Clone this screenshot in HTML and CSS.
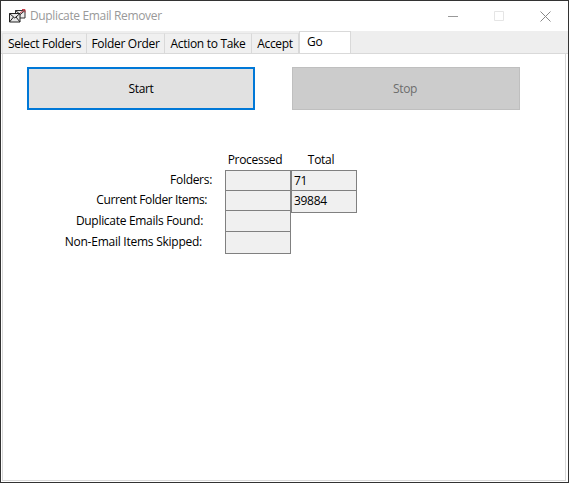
FILE: index.html
```html
<!DOCTYPE html>
<html lang="en">
  <head>
    <meta charset="UTF-8" />
    <title>Duplicate Email Remover</title>
    <link rel="stylesheet" href="styles.css">
  </head>
  <body>
    <div class="window">
      <div class="titlebar">
        <svg class="app-icon" width="17" height="15" viewBox="0 0 17 15">
          <path d="M6.500 1.500h9.500v7.500h-9.500z" fill="#eee" stroke="#333" />
          <path d="M6.500 1.500l4.750 4 4.750-4" fill="none" stroke="#333" />
          <path d="M.5 4.500h10.500v8.500h-10.500z" fill="#e8e8e8" stroke="#222" />
          <path d="M.5 4.500l5.250 4.500 5.250-4.500M.5 13l4-5M11 13l-4-5" fill="none" stroke="#222" />
          <path d="M11 4l5-3.500M13 .5h3v3" fill="none" stroke="#c8434f" />
        </svg>
        <span class="title">Duplicate Email Remover</span>
        <div class="caption-buttons">
          <svg width="11" height="11" viewBox="0 0 11 11"><path d="M0 5.500h10" stroke="#999" /></svg>
          <svg width="11" height="11" viewBox="0 0 11 11"><path d="M.5 .5h9v9h-9z" fill="none" stroke="#e5e5e5" /></svg>
          <svg width="11" height="11" viewBox="0 0 11 11"><path d="M.5 .5l10 10M10.500 .5l-10 10" stroke="#888" /></svg>
        </div>
      </div>

      <div class="tabs">
        <div class="tab tab-folders">Select Folders</div>
        <div class="tab tab-order">Folder Order</div>
        <div class="tab tab-action">Action to Take</div>
        <div class="tab tab-accept">Accept</div>
        <div class="tab tab-go">Go</div>
      </div>

      <div class="panel">
        <div class="buttons">
          <button class="btn btn-start">Start</button>
          <button class="btn btn-stop" disabled>Stop</button>
        </div>

        <div class="stats">
          <div class="heading heading-processed">Processed</div>
          <div class="heading heading-total">Total</div>

          <div class="label label-folders">Folders:</div>
          <div class="cell"></div>
          <div class="cell">71</div>

          <div class="label label-items">Current Folder Items:</div>
          <div class="cell"></div>
          <div class="cell cell-overhang">39884</div>

          <div class="label label-duplicates">Duplicate Emails Found:</div>
          <div class="cell"></div>
          <div class="spacer"></div>

          <div class="label label-skipped">Non-Email Items Skipped:</div>
          <div class="cell cell-bottom"></div>
          <div class="spacer"></div>
        </div>
      </div>
    </div>
  </body>
</html>
```

FILE: styles.css
```css
* {
  margin: 0;
  padding: 0;
  box-sizing: border-box;
}

html,
body {
  width: 569px;
  height: 483px;
  overflow: hidden;
}

body {
  font-family: "Open Sans", "Noto Sans", Arial, sans-serif;
  font-size: 12px;
  letter-spacing: -0.3px;
  color: #000;
  background-color: #fff;
}

.window {
  display: flex;
  flex-direction: column;
  width: 569px;
  height: 483px;
  border: 1px solid #333;
  background-color: #fff;
}

.titlebar {
  display: flex;
  align-items: center;
  height: 30px;
  flex-shrink: 0;
  padding-left: 8px;
}

.app-icon {
  margin-right: 4px;
}

.title {
  margin-bottom: 2px;
  color: #999;
  letter-spacing: -0.35px;
}

.caption-buttons {
  display: flex;
  gap: 35px;
  margin-left: auto;
  margin-right: 17px;
}

.tabs {
  display: flex;
  align-items: flex-start;
  height: 23px;
  flex-shrink: 0;
  padding: 2px 0 0 1px;
  background-color: #eee;
  border-bottom: 1px solid #d9d9d9;
}

.tab {
  height: 20px;
  line-height: 19px;
  text-align: center;
  background-color: #f0f0f0;
  border-top: 1px solid #e3e3e3;
  border-right: 1px solid #d9d9d9;
  white-space: nowrap;
}

.tab-folders {
  width: 85px;
  border-left: 1px solid #e3e3e3;
}

.tab-order {
  width: 78px;
}

.tab-action {
  width: 87px;
}

.tab-accept {
  width: 47px;
}

.tab-go {
  width: 52px;
  height: 22px;
  margin-top: -2px;
  padding-left: 7px;
  text-align: left;
  background-color: #fff;
  border: 1px solid #d9d9d9;
  border-bottom: none;
  line-height: 20px;
}

.panel {
  flex: 1;
  margin: 0 2px 1px 1px;
  padding: 13px 0 0 24px;
  border-right: 1px solid #d9d9d9;
  border-bottom: 1px solid #d9d9d9;
  border-left: 1px solid #d9d9d9;
}

.buttons {
  display: flex;
  gap: 37px;
}

.btn {
  width: 228px;
  height: 43px;
  font: inherit;
  letter-spacing: inherit;
  color: #000;
  background-color: #e1e1e1;
  border: 2px solid #0078d7;
}

.btn-stop {
  padding-right: 2px;
  color: #6d6d6d;
  background-color: #ccc;
  border: 1px solid #bfbfbf;
}

.stats {
  display: grid;
  grid-template-columns: 198px 66px 66px;
  grid-template-rows: 19px 20px 20px 21px 23px;
  margin-top: 41px;
}

.heading {
  padding-right: 6px;
  line-height: 18px;
  text-align: center;
}

.heading-processed {
  grid-column: 2;
}

.heading-total {
  grid-column: 3;
}

.label {
  line-height: 20px;
  text-align: right;
  white-space: nowrap;
}

.label-folders {
  padding-right: 13px;
}

.label-items {
  padding-right: 18px;
  letter-spacing: -0.4px;
}

.label-duplicates {
  padding-top: 1px;
  padding-right: 22px;
}

.label-skipped {
  padding-top: 1px;
  padding-right: 23px;
  letter-spacing: -0.25px;
}

.cell {
  padding-left: 2px;
  line-height: 20px;
  background-color: #f0f0f0;
  border: 1px solid #808080;
  border-bottom: none;
}

.cell-overhang {
  height: 23px;
  border-bottom: 1px solid #808080;
}

.cell-bottom {
  border-bottom: 1px solid #808080;
}
```
